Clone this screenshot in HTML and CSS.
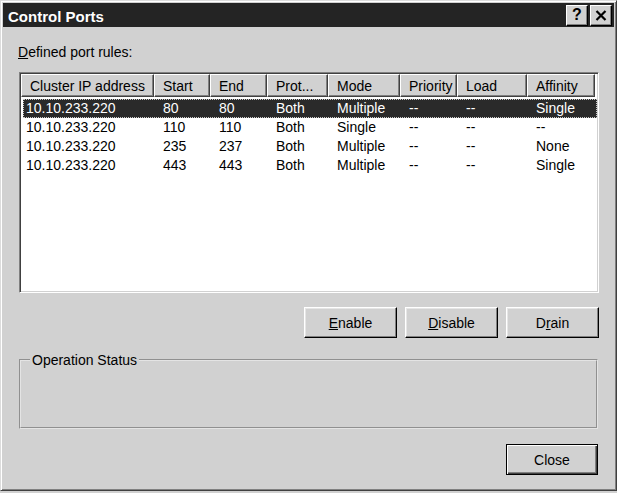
FILE: index.html
```html
<!DOCTYPE html>
<html>
<head>
<meta charset="utf-8">
<link rel="stylesheet" href="styles.css">
</head>
<body>
<div class="window">
  <div class="titlebar">
    <span class="title">Control Ports</span>
    <div class="tb-buttons">
      <span class="tb-btn help">?</span>
      <span class="tb-btn close">
        <svg width="12" height="11" viewBox="0 0 12 11"><path d="M1.5 1 L10.5 10 M10.5 1 L1.5 10" stroke="#000" stroke-width="2.2" fill="none"/></svg>
      </span>
    </div>
  </div>
  <div class="content">
    <div class="label"><u>D</u>efined port rules:</div>
    <div class="listview">
      <div class="lv-header">
        <div class="th">Cluster IP address</div>
        <div class="th">Start</div>
        <div class="th">End</div>
        <div class="th">Prot...</div>
        <div class="th">Mode</div>
        <div class="th">Priority</div>
        <div class="th">Load</div>
        <div class="th">Affinity</div>
      </div>
      <div class="lv-body">
        <div class="row selected">
          <div class="td">10.10.233.220</div><div class="td">80</div><div class="td">80</div><div class="td">Both</div><div class="td">Multiple</div><div class="td">--</div><div class="td">--</div><div class="td">Single</div>
        </div>
        <div class="row">
          <div class="td">10.10.233.220</div><div class="td">110</div><div class="td">110</div><div class="td">Both</div><div class="td">Single</div><div class="td">--</div><div class="td">--</div><div class="td">--</div>
        </div>
        <div class="row">
          <div class="td">10.10.233.220</div><div class="td">235</div><div class="td">237</div><div class="td">Both</div><div class="td">Multiple</div><div class="td">--</div><div class="td">--</div><div class="td">None</div>
        </div>
        <div class="row">
          <div class="td">10.10.233.220</div><div class="td">443</div><div class="td">443</div><div class="td">Both</div><div class="td">Multiple</div><div class="td">--</div><div class="td">--</div><div class="td">Single</div>
        </div>
      </div>
    </div>
    <div class="btn-row">
      <button class="btn"><u>E</u>nable</button>
      <button class="btn"><u>D</u>isable</button>
      <button class="btn">D<u>r</u>ain</button>
    </div>
    <fieldset class="group"><legend>Operation Status</legend></fieldset>
    <div class="bottom-row">
      <button class="btn default">Close</button>
    </div>
  </div>
</div>
</body>
</html>
```

FILE: styles.css
```css
html, body {
  margin: 0;
  padding: 0;
  background: #d1d1d1;
}
body {
  font-family: "Liberation Sans", Arial, sans-serif;
  font-size: 14px;
  color: #000;
}
.window {
  box-sizing: border-box;
  width: 617px;
  height: 491px;
  background: #d1d1d1;
  border: 1px solid;
  border-color: #dcdcdc #404040 #404040 #dcdcdc;
  box-shadow: inset 1px 1px #fff, inset -1px -1px #808080;
  padding: 2px;
  display: flex;
  flex-direction: column;
}
.titlebar {
  height: 24px;
  background: #242424;
  display: flex;
  align-items: center;
  justify-content: space-between;
  padding: 0 2px 0 5px;
}
.title {
  color: #fff;
  font-weight: bold;
  font-size: 15px;
  line-height: 24px;
  padding-top: 3px;
}
.tb-buttons {
  display: flex;
  gap: 2px;
}
.tb-btn {
  box-sizing: border-box;
  width: 22px;
  height: 21px;
  background: #d1d1d1;
  border: 1px solid;
  border-color: #fff #000 #000 #fff;
  box-shadow: inset -1px -1px #808080;
  display: flex;
  align-items: center;
  justify-content: center;
  font-weight: bold;
  font-size: 16px;
  line-height: 1;
}
.content {
  flex: 1;
  padding: 0 15px 0 16px;
  display: flex;
  flex-direction: column;
}
.label {
  margin-top: 17px;
  margin-left: -1px;
  line-height: 16px;
}
.listview {
  box-sizing: border-box;
  margin-top: 12px;
  width: 580px;
  height: 221px;
  background: #fff;
  border: 1px solid;
  border-color: #808080 #fff #fff #808080;
  box-shadow: inset 1px 1px #404040, inset -1px -1px #d1d1d1;
  padding: 1px;
  overflow: hidden;
}
.lv-header {
  display: grid;
  grid-template-columns: 133px 56px 57px 61px 72px 57px 70px 68px;
  height: 23px;
}
.th {
  box-sizing: border-box;
  background: #d1d1d1;
  border: 1px solid;
  border-color: #fff #404040 #404040 #fff;
  box-shadow: inset -1px -1px #808080;
  padding: 2px 0 0 8px;
  line-height: 18px;
  white-space: nowrap;
  overflow: hidden;
}
.lv-body {
  padding-top: 2px;
}
.row {
  display: grid;
  grid-template-columns: 131px 56px 57px 61px 72px 57px 70px 68px;
  margin-left: 2px;
  height: 19px;
  line-height: 19px;
}
.td {
  padding-left: 9px;
  white-space: nowrap;
}
.td:first-child {
  padding-left: 3px;
}
.row.selected {
  background: #2a2a2a;
  color: #fff;
  outline: 1px dotted #c8c8c8;
  outline-offset: -1px;
}
.btn-row {
  margin-top: 14px;
  display: flex;
  justify-content: flex-end;
  gap: 8px;
}
.btn {
  box-sizing: border-box;
  width: 93px;
  height: 31px;
  background: #d1d1d1;
  font-family: "Liberation Sans", Arial, sans-serif;
  font-size: 14px;
  color: #000;
  border: 1px solid;
  border-color: #fff #000 #000 #fff;
  box-shadow: inset -1px -1px #808080, inset 1px 1px #e6e6e6;
  padding: 0;
  margin: 0;
}
.btn.default {
  width: 92px;
  border-color: #000;
  box-shadow: inset 1px 1px #fff, inset -1px -1px #404040, inset -2px -2px #808080;
}
.group {
  box-sizing: border-box;
  margin: 14px 1px 0 0;
  padding: 0;
  height: 77px;
  min-width: 0;
  border: 2px groove #e4e4e4;
}
.group legend {
  margin-left: 9px;
  padding: 0 2px;
  line-height: 16px;
}
.bottom-row {
  margin-top: 15px;
  display: flex;
  justify-content: flex-end;
  padding-right: 1px;
}
```
